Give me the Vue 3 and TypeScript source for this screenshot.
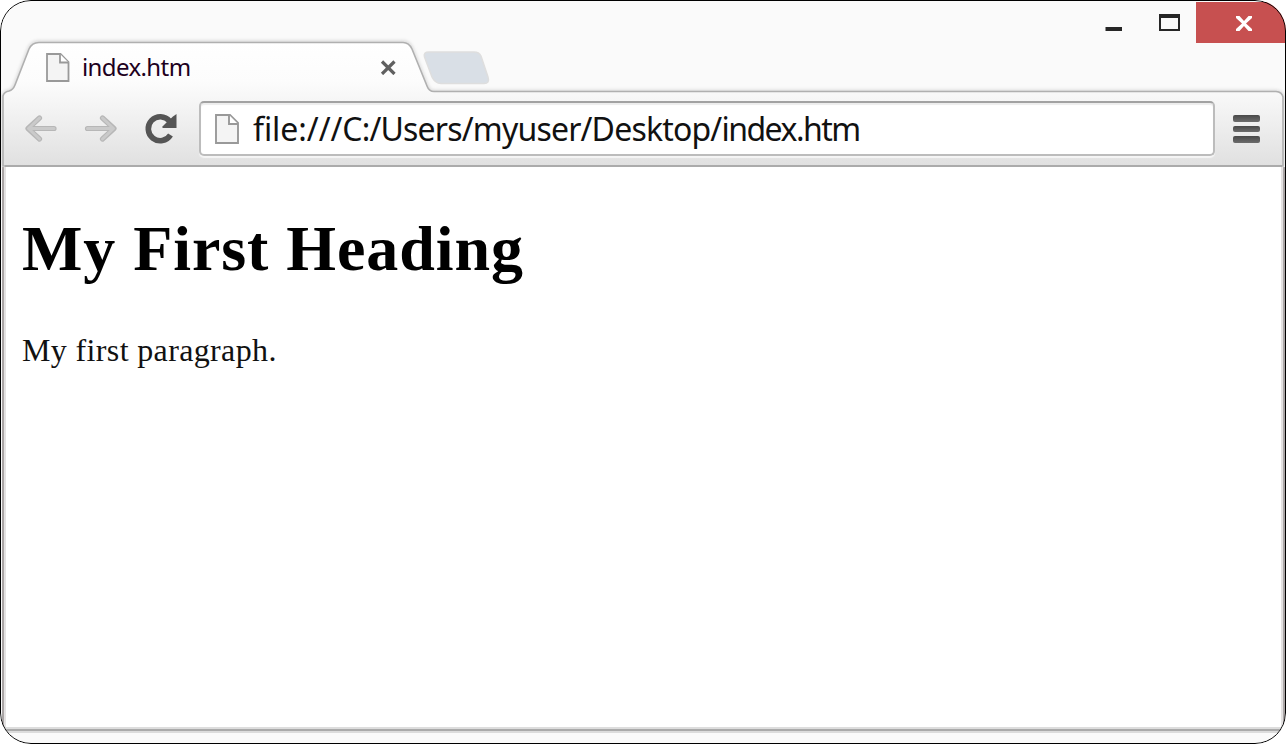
<script setup lang="ts">
const tabTitle: string = 'index.htm'
const scheme: string = 'file:///'
const folder: string = 'C:/Users/myuser/Desktop/'
const fileName: string = 'index.htm'
</script>

<template>
  <div class="window">
    <svg class="frame" width="1286" height="744" viewBox="0 0 1286 744" aria-hidden="true">
      <defs>
        <linearGradient id="chrome" gradientUnits="userSpaceOnUse" x1="0" y1="42" x2="0" y2="166">
          <stop offset="0" stop-color="#ffffff" />
          <stop offset="0.32" stop-color="#fcfcfc" />
          <stop offset="0.5" stop-color="#f5f5f5" />
          <stop offset="1" stop-color="#e0e0e0" />
        </linearGradient>
        <filter id="soft" x="-5%" y="-20%" width="110%" height="140%"><feGaussianBlur stdDeviation="1.8" /></filter>
      </defs>
      <path d="M3 166V96Q4 92 9 91Q13 90 15 85L29 49Q32 42 39 42H403Q409 42 412 49L427 86Q429 91.500 434 91.500H1276Q1282 92 1283 97V166" fill="none" stroke="#dedede" stroke-width="4" filter="url(#soft)" />
      <path d="M3 166V96Q4 92 9 91Q13 90 15 85L29 49Q32 42.500 39 42.500H403Q409 42.500 412 49L427 86Q429 91.500 434 91.500H1276Q1282 92 1283 97V166Z" fill="url(#chrome)" stroke="#b0b0b0" stroke-width="1.600" />
      <path d="M429 52H474Q479 52 481 56L488 77Q490 83.500 484 83.500H441Q435 83.500 432 77L424.500 57Q423 52 429 52Z" fill="#d9dfe6" stroke="#dedede" stroke-width="1.500" />
    </svg>

    <header class="titlebar">
      <div class="tab">
        <svg class="doc" width="24" height="30" viewBox="0 0 24 30">
          <path d="M1 2H14.500L22.500 10V29H1Z" fill="#f4f4f4" stroke="#999" stroke-width="1.800" />
          <path d="M14 2V10.500H22.500" fill="#fff" stroke="#999" stroke-width="1.800" />
        </svg>
        <span class="tab-title">{{ tabTitle }}</span>
        <svg class="tab-close" width="16" height="16" viewBox="0 0 16 16"><path d="M2 2.500L14.500 15M14.500 2.500L2 15" stroke="#606060" stroke-width="3.200" /></svg>
      </div>
      <div class="controls">
        <svg width="110" height="43" viewBox="0 0 110 43">
          <path d="M19.500 27H36V31H19.500Z" fill="#262626" />
          <path d="M73 14H94V31H73ZM75 18V29H92V18Z" fill="#262626" fill-rule="evenodd" />
        </svg>
        <div class="close"><svg width="18" height="16" viewBox="0 0 18 16"><path d="M1 0H4.500L9 5L13.500 0H17V2L11 7.500L17 13V15H13.500L9 10L4.500 15H1V13L7 7.500L1 2Z" fill="#fff" /></svg></div>
      </div>
    </header>

    <nav class="toolbar">
      <svg class="nav" width="180" height="40" viewBox="0 0 180 40">
        <g stroke-linecap="round" stroke-linejoin="round" fill="none">
          <path d="M37.500 10L26 20.500L37.500 31M27 20.500H52" stroke="#b7b7b7" stroke-width="5.200" />
          <path d="M37.500 10L26.500 20.500L37.500 31M27 20.500H52" stroke="#cacaca" stroke-width="3" />
          <path d="M100.500 10L112 20.500L100.500 31M85.500 20.500H111" stroke="#b7b7b7" stroke-width="5.200" />
          <path d="M100.500 10L111.500 20.500L100.500 31M85.500 20.500H111" stroke="#cacaca" stroke-width="3" />
        </g>
        <path d="M167.500 13A12 12 0 1 0 168.500 27" fill="none" stroke="#555" stroke-width="5.600" />
        <path d="M171 8.500L174.500 6V20H160.500V18.500L165 14Z" fill="#555" />
      </svg>
      <div class="address">
        <svg class="doc" width="24" height="32" viewBox="0 0 24 32">
          <path d="M1 2H15L23 10V30H1Z" fill="#f4f4f4" stroke="#999" stroke-width="1.900" />
          <path d="M14 2V11H23" fill="#fff" stroke="#999" stroke-width="1.900" />
        </svg>
        <span class="url"><span class="scheme">{{ scheme }}</span><span>{{ folder }}</span><span class="file">{{ fileName }}</span></span>
      </div>
      <div class="menu"><i></i><i></i><i></i></div>
    </nav>

    <main class="page">
      <h1>My First Heading</h1>
      <p>My first paragraph.</p>
    </main>
    <footer class="bottom"></footer>
    <div class="outline"></div>
  </div>
</template>

<style>
html, body { margin: 0; background: #fff; overflow: hidden; }
</style>

<style scoped>
.window { position: relative; width: 1286px; height: 744px; box-sizing: border-box; overflow: hidden; border-radius: 31px; background: #fafafa; display: flex; flex-direction: column; }
.frame { position: absolute; left: 0; top: 0; }
.outline { position: absolute; inset: 0; border: 1px solid #000; border-radius: 31px; pointer-events: none; }
.titlebar { position: relative; height: 92px; display: flex; justify-content: space-between; flex: none; }
.tab { display: flex; align-items: center; width: 350px; height: 50px; margin: 42px 0 0 46px; box-sizing: border-box; }
.tab-title { margin-left: 12px; font: 24px/32px "Noto Sans", sans-serif; letter-spacing: -0.6px; color: #1d0020; white-space: nowrap; }
.tab-close { margin-left: auto; }
.controls { display: flex; height: 43px; }
.close { width: 90px; height: 41px; margin-top: 2px; box-sizing: border-box; padding: 14px 0 0 38.5px; background: #c75050; }
.close svg, .controls svg, .nav, .doc { display: block; flex: none; }
.toolbar { position: relative; height: 75px; flex: none; box-sizing: border-box; border-bottom: 2px solid #ababab; margin: 0 4px 0 5px; display: flex; padding-top: 9px; }
.nav { margin: 7px 0 0 -3px; }
.address { display: flex; align-items: center; width: 1016px; height: 55px; margin-left: 17px; box-sizing: border-box; border: 2px solid #bcbcbc; border-top-color: #a2a2a2; border-radius: 5px; background: #fff; padding-left: 14px; box-shadow: 0 2px 1px #f5f5f5, inset 0 2px 1px #ededed; }
.url { margin-left: 14px; font: 32px/40px "Noto Sans", sans-serif; letter-spacing: -0.82px; color: #111; white-space: nowrap; }
.scheme { letter-spacing: -0.07px; }
.file { letter-spacing: -1.5px; }
.menu { display: flex; flex-direction: column; gap: 4px; margin: 14px 0 0 18px; }
.menu i { width: 27px; height: 6.5px; border-radius: 2px; background: linear-gradient(#484848, #6c6c6c); }
.page { flex: 1; box-sizing: border-box; padding: 45px 0 0 18px; background: #fff; border-left: 2px solid #aaa5a5; border-right: 2px solid #aaa5a5; margin: 0 1px 0 2px; box-shadow: inset 2px 0 #e4e2e2, inset -2px 0 #e4e2e2; }
h1 { margin: 0; font: bold 64px/74px "Liberation Serif", serif; letter-spacing: 0.93px; color: #000; white-space: nowrap; }
p { margin: 46px 0 0; font: 32px/36px "Liberation Serif", serif; letter-spacing: 0.36px; color: #111; white-space: nowrap; }
.bottom { position: relative; height: 17px; flex: none; background: linear-gradient(#ddd 0 2px, #aaa 2px 4px, #dcdcdc 4px 6px, #fafafa 6px); }
</style>
